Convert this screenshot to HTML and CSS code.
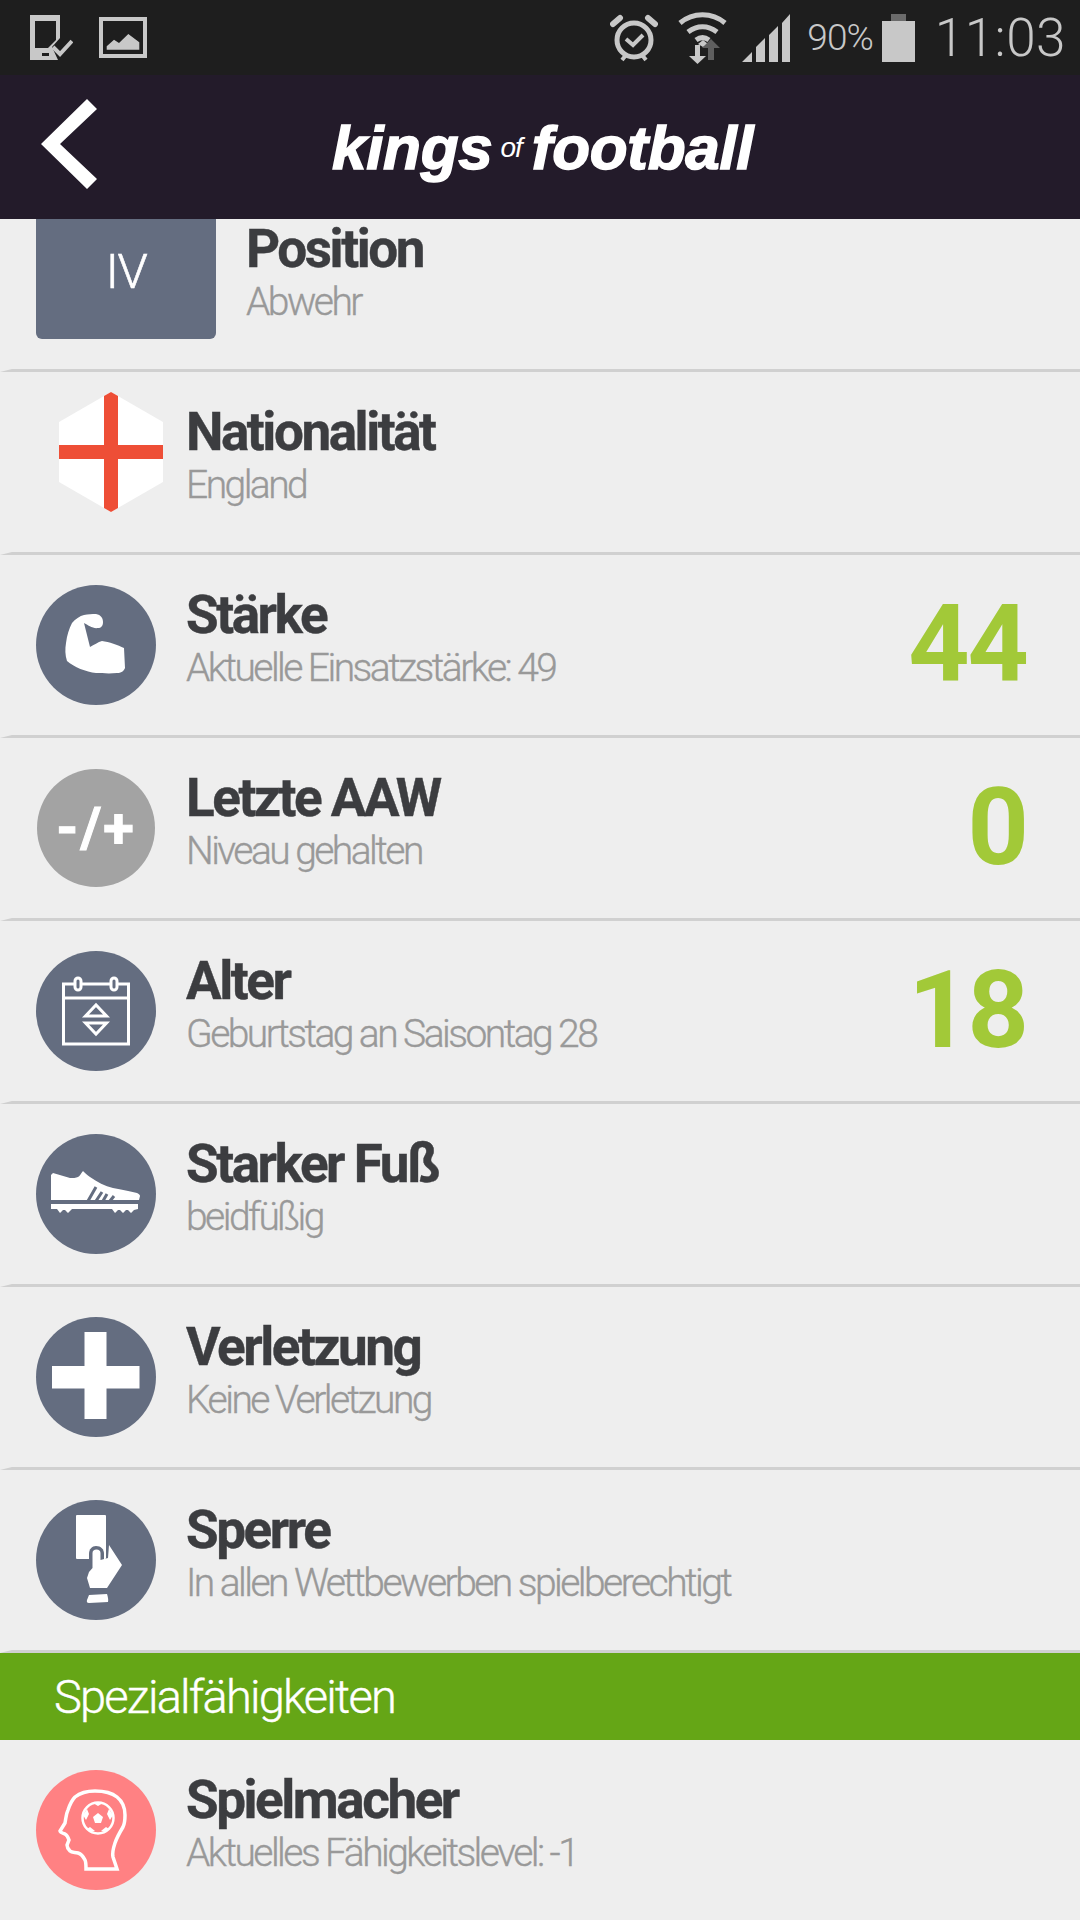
FILE: index.html
```html
<!DOCTYPE html>
<html lang="de">
<head>
<meta charset="utf-8">
<title>kings of football</title>
<link rel="stylesheet" href="styles.css">
</head>
<body>
<div class="page">
  <div class="status">
    <svg class="st-phone" viewBox="0 0 43 45"><path fill="#c8c8c8" fill-rule="evenodd" d="M0 0h30v23l-8 9 6 13H0zM5 6v27h13l8-8V6zM12 38v3h7v-3z"/><path fill="none" stroke="#c8c8c8" stroke-width="4" d="M23 32l7 7 12-13"/></svg>
    <svg class="st-image" viewBox="0 0 48 41"><path fill="#c8c8c8" fill-rule="evenodd" d="M0 0h48v41H0zM4 4v33h40V4z"/><path fill="#c8c8c8" d="M7.700 32.700v-3.400L15 22.700l5 3.300 9.300-9 11 8.300v7.400z"/></svg>
    <span class="st-spacer"></span>
    <svg class="st-alarm" viewBox="0 0 48 50"><circle cx="24" cy="27" r="17" fill="none" stroke="#c8c8c8" stroke-width="5"/><path fill="none" stroke="#c8c8c8" stroke-width="4" d="M16 26l7 6 10-10"/><path stroke="#c8c8c8" stroke-width="6" stroke-linecap="round" d="M3 11l7-6M45 11l-7-6"/><path stroke="#c8c8c8" stroke-width="4" d="M12 47l4-5M36 47l-4-5"/></svg>
    <svg class="st-wifi" viewBox="0 0 49 53"><g fill="none" stroke="#c8c8c8" stroke-width="5"><path d="M2 12c13-11 32-11 45 0"/><path d="M10 21c9-7 20-7 29 0"/><path d="M18 29c4-3 9-3 13 0"/></g><path fill="#c8c8c8" d="M20 33l5-4 5 4-5 3z"/><path fill="#c8c8c8" d="M17 34h5v11h6l-8.500 8-8.500-8h6z"/><path fill="#5f5f5f" d="M30 49V37h-6l9-9 9 9h-6v12z"/></svg>
    <svg class="st-signal" viewBox="0 0 48 48"><path fill="#c8c8c8" d="M0 48l10-10v10zM14 48V33l9-9v24zM27 48V21l9-9v36zM40 48V9l8-9v48z"/></svg>
    <span class="st-batt-text">90%</span>
    <span class="battery"><span class="battery-cap"></span><span class="battery-body"></span></span>
    <span class="st-time">11:03</span>
  </div>

  <header class="header">
    <svg class="back" viewBox="0 0 56 90"><path fill="#fff" d="M0 45L46 0l10 10-37 35 37 35-10 10z"/></svg>
    <div class="logo"><span class="logo-word">kings</span><span class="logo-of">of</span><span class="logo-word">football</span></div>
  </header>

  <main class="list">
    <section class="row row-first">
      <div class="badge">IV</div>
      <div class="text text-first">
        <div class="title">Position</div>
        <div class="sub">Abwehr</div>
      </div>
    </section>
    <div class="divider"></div>

    <section class="row">
      <svg class="hex" viewBox="0 0 104 120"><path fill="#fff" d="M52 0l52 30v60l-52 30L0 90V30z"/><path fill="#ee4e36" d="M45 4l7-4 7 4v112l-7 4-7-4z"/><rect y="53" width="104" height="14" fill="#ee4e36"/></svg>
      <div class="text">
        <div class="title">Nationalität</div>
        <div class="sub">England</div>
      </div>
    </section>
    <div class="divider"></div>

    <section class="row">
      <div class="circle"><svg class="ic" viewBox="0 0 120 120"><path fill="#fff" d="M48 30c4-1 8-1 12-1 5 1 7 4 7 8s-2 6-5 6c-5 1-10-3-14-5l6 24c4-2 8-5 12-6 7 1 16 4 22 7l1 20c-1 3-4 5-8 5-9 1-15 0-21 0-10-1-22-6-29-12-2-6-2-12-1-18 1-8 3-14 6-20 3-4 8-7 12-8z"/></svg></div>
      <div class="text">
        <div class="title">Stärke</div>
        <div class="sub">Aktuelle Einsatzstärke: 49</div>
      </div>
      <div class="value">44</div>
    </section>
    <div class="divider"></div>

    <section class="row">
      <div class="circle circle-grey"><span class="plusminus">-/+</span></div>
      <div class="text">
        <div class="title">Letzte AAW</div>
        <div class="sub">Niveau gehalten</div>
      </div>
      <div class="value">0</div>
    </section>
    <div class="divider"></div>

    <section class="row">
      <div class="circle"><svg class="ic" viewBox="0 0 120 120"><g fill="none" stroke="#fff" stroke-width="3"><path d="M38 33H27.500v60h65V33H82M46 33h28M27.500 47h65"/><rect x="39" y="27" width="6" height="12" rx="3"/><rect x="75" y="27" width="6" height="12" rx="3"/><path d="M49.500 65L60 54l10.500 11z"/><path d="M49.500 72L60 83l10.500-11z"/></g></svg></div>
      <div class="text">
        <div class="title">Alter</div>
        <div class="sub">Geburtstag an Saisontag 28</div>
      </div>
      <div class="value">18</div>
    </section>
    <div class="divider"></div>

    <section class="row">
      <div class="circle"><svg class="ic" viewBox="0 0 120 120"><path fill="#fff" d="M15 41l2-2 17 5c3 0 6 0 8-1 2-1 3-4 5-6 2 2 4 4 7 6 7 5 15 9 23 11 9 2 17 3 24 5 2 1 3 2 3 3l-1 4H15z"/><g fill="none" stroke="#646d80" stroke-width="3"><path d="M52 67l8-14M60 67l6-9M67 67l4-7M74 67l4-5"/></g><path fill="#fff" d="M15 70h87v5l-4 1-3 3-3-3h-2l-3 3-3-3h-2l-3 3-3-4H36l-4 4-3-3h-2l-3 3-3-4h-6z"/></svg></div>
      <div class="text">
        <div class="title">Starker Fuß</div>
        <div class="sub">beidfüßig</div>
      </div>
    </section>
    <div class="divider"></div>

    <section class="row">
      <div class="circle"><svg class="ic" viewBox="0 0 120 120"><path fill="#fff" d="M48.500 15h22v34h33v22.500h-33V102h-22V71.500H16V49h32.500z"/></svg></div>
      <div class="text">
        <div class="title">Verletzung</div>
        <div class="sub">Keine Verletzung</div>
      </div>
    </section>
    <div class="divider"></div>

    <section class="row">
      <div class="circle"><svg class="ic" viewBox="0 0 120 120"><rect x="40" y="15" width="30" height="44" rx="1" fill="#fff"/><path fill="#646d80" d="M53 63v-9c0-5 3-8 7-8 5 0 8 3 8 8v8z"/><path fill="#fff" d="M56.500 58v-5c0-2 1.500-3.500 4-3.500s4 1.500 4 3.500v7l7.500-2 1-13 13 20-15 23H54l-3-10 2-6 3.500-4z"/><path fill="#fff" d="M53 95l18-1c1 3 1.500 6 1 8l-19 1c-2 0-2.500-1-2-3z"/></svg></div>
      <div class="text">
        <div class="title">Sperre</div>
        <div class="sub">In allen Wettbewerben spielberechtigt</div>
      </div>
    </section>
    <div class="divider"></div>

    <div class="section-head">Spezialfähigkeiten</div>

    <section class="row row-last">
      <div class="circle circle-red"><svg class="ic" viewBox="0 0 120 120"><path fill="none" stroke="#fff" stroke-width="3.500" d="M50 99c0-5 0-7-1-9-2-4-4-6-7-7s-6 0-8-2c-2-2-3-4-3-6l2-5c-1-3-2-5-4-6-3-1-5-2-5-3l5-8c1-5 1-9 3-13 2-6 3-9 7-13 5-4 12-6 20-6s17 2 22 6c5 4 8 11 8 18 0 5 0 8-2 12-3 5-6 10-8 16-2 6-3 10-2 14l4 12z"/><circle cx="62" cy="48" r="15.500" fill="none" stroke="#fff" stroke-width="2.500"/><path fill="#fff" d="M62 43l5 4-2 6h-6l-2-6zM57 33h10l-5 3zM47 45l4-6 2 5-3 6zM77 45l-4-6-2 5 3 6zM51 59l4 3 4-1-5-4zM73 59l-4 3-4-1 5-4z"/></svg></div>
      <div class="text">
        <div class="title">Spielmacher</div>
        <div class="sub">Aktuelles Fähigkeitslevel: -1</div>
      </div>
    </section>
  </main>
</div>
</body>
</html>
```
FILE: styles.css
```css
* { box-sizing: border-box; }
html, body { margin: 0; padding: 0; }
body { background: #eeeeee; font-family: Roboto, "Liberation Sans", sans-serif; }
.page { width: 1080px; height: 1920px; overflow: hidden; display: flex; flex-direction: column; background: #eeeeee; }

.status { height: 75px; background: #1e1e1e; display: flex; align-items: center; padding: 0 14px 0 30px; color: #c8c8c8; flex: none; }
.st-phone { width: 43px; height: 45px; }
.st-image { width: 48px; height: 41px; margin-left: 26px; }
.st-spacer { flex: 1; }
.st-alarm { width: 48px; height: 50px; }
.st-wifi { width: 49px; height: 53px; margin-left: 20px; }
.st-signal { width: 48px; height: 48px; margin-left: 15px; }
.st-batt-text { font-weight: 300; font-size: 37px; letter-spacing: -1px; margin-left: 17px; }
.battery { width: 33px; height: 48px; margin-left: 9px; display: flex; flex-direction: column; align-items: center; }
.battery-cap { width: 15px; height: 7px; background: #6b6b6b; }
.battery-body { width: 33px; flex: 1; background: #c8c8c8; }
.st-time { font-weight: 300; font-size: 53px; letter-spacing: 0.5px; margin-left: 20px; }

.header { height: 144px; background: #231b2a; display: flex; align-items: center; padding-left: 41px; flex: none; }
.back { width: 56px; height: 90px; margin-bottom: 6px; }
.logo { margin-left: 235px; white-space: nowrap; color: #fff; font-family: "Liberation Sans", Arial, sans-serif; font-style: italic; font-weight: 700; }
.logo-word { font-size: 62px; letter-spacing: -0.3px; -webkit-text-stroke: 1.5px #fff; }
.logo-of { font-size: 28px; font-weight: 400; margin: 0 10px 0 8px; vertical-align: 12px; letter-spacing: -1px; }

.list { flex: 1; display: flex; flex-direction: column; }
.row { height: 180px; padding-left: 36px; padding-right: 53px; display: flex; align-items: center; flex: none; }
.row-first { height: 150px; align-items: flex-start; }
.row-last { height: 180px; }
.divider { height: 3px; background: #d0d0d0; flex: none; clip-path: polygon(0 100%, 12px 0, 100% 0, 100% 100%); }

.badge { width: 180px; height: 120px; background: #646d80; border-radius: 0 0 6px 6px; color: #fff; font-weight: 300; font-size: 49px; letter-spacing: -1.5px; -webkit-text-stroke: 0.6px #fff; display: flex; align-items: center; justify-content: center; padding-bottom: 16px; }
.hex { width: 104px; height: 120px; margin: 0 23px 20px 23px; flex: none; }

.circle { width: 120px; height: 120px; border-radius: 50%; background: #646d80; display: flex; align-items: center; justify-content: center; flex: none; margin-right: 30px; }
.circle-grey { background: #a3a3a3; width: 118px; height: 118px; margin: 0 31px 0 1px; }
.circle-red { background: #ff8183; }
.ic { width: 120px; height: 120px; display: block; }
.plusminus { color: #fff; font-weight: 700; font-size: 56px; letter-spacing: 2px; -webkit-text-stroke: 1px #fff; }

.text { flex: 1; min-width: 0; display: flex; flex-direction: column; margin-top: -14px; }
.text-first { margin-top: 0; margin-left: 30px; }
.title { font-weight: 700; font-size: 53px; line-height: 60px; letter-spacing: -2.45px; color: #3c3d40; -webkit-text-stroke: 0.4px #3c3d40; }
.sub { font-weight: 300; font-size: 39px; line-height: 46px; letter-spacing: -2.55px; color: #999999; -webkit-text-stroke: 0.35px #999999; }
.value { font-weight: 700; font-size: 107px; line-height: 1; letter-spacing: -2px; color: #a2c938; margin-top: -2px; }

.section-head { height: 87px; background: #65a616; color: #fff; font-weight: 300; font-size: 47px; letter-spacing: -1.8px; -webkit-text-stroke: 0.4px #fff; padding-left: 54px; display: flex; align-items: center; flex: none; }
```
